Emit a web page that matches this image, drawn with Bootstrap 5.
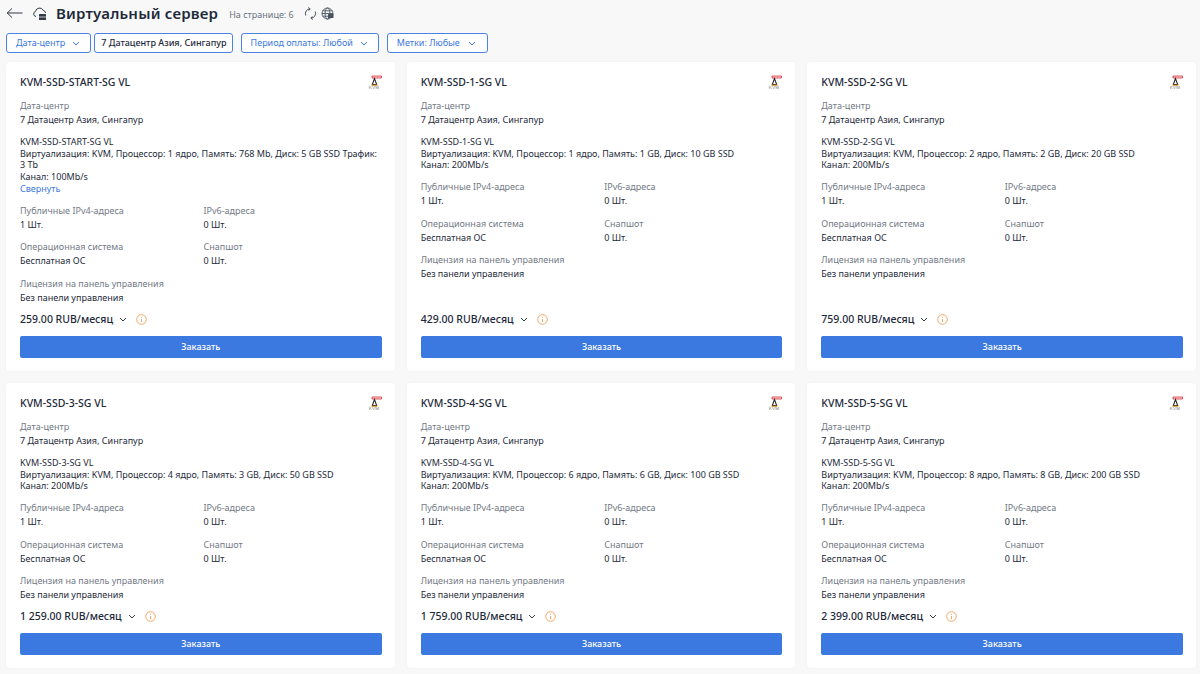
<!DOCTYPE html>
<html lang="ru">
<head>
    <meta charset="UTF-8">
    <title>Виртуальный сервер</title>
    <link href="https://cdn.jsdelivr.net/npm/bootstrap@5.3.3/dist/css/bootstrap.min.css" rel="stylesheet">
    <style>
        body { background: #f8f8f8; color: #1e2a3a; font-family: "Noto Sans", sans-serif; font-size: 9px; height: 674px; overflow: hidden; }
        .page-wrap { padding: 0 4px 0 6px; }
        .page-head { height: 26px; }
        .back-btn { width: 17px; margin-right: 10px; }
        .page-title { font-size: 15px; font-weight: 600; line-height: 24px; margin: 0 11px 0 9px; letter-spacing: .2px; }
        .page-count { font-size: 9px; color: #6d7480; margin-right: 10px; padding-top: 3px; }
        .filter-bar { height: 20px; margin-top: 7px; margin-bottom: 9px; }
        .filter-btn { height: 20px; border: 1px solid #4a82e4; border-radius: 3px; background: #fff; color: #3b78e0; font-size: 9px; line-height: 18px; padding: 0 10px 0 9px; display: flex; align-items: center; gap: 7px; white-space: nowrap; }
        .filter-btn.val { color: #1e2a3a; font-weight: 500; padding: 0 5px 0 6px; margin: 0 8px 0 3px; }
        .filter-btn.tags { margin-left: 8px; padding-right: 11px; gap: 8px; }
        .cards-row { --bs-gutter-x: 12px; --bs-gutter-y: 12px; }
        .srv-card { background: #fff; border-radius: 4px; box-shadow: 0 0 3px rgba(0,0,0,.04); padding: 12px 13px 13px 14px; display: flex; flex-direction: column; height: 309px; }
        .srv-card.short { height: 285px; }
        .srv-title { font-size: 10.5px; font-weight: 500; line-height: 16px; margin-bottom: 9px; }
        .srv-lbl { color: #737a85; line-height: 14px; }
        .srv-val { line-height: 14.5px; }
        .srv-desc { line-height: 11.7px; margin-top: 8.5px; margin-bottom: 9px; }
        .srv-desc a { color: #3b78e0; text-decoration: none; display: block; }
        .srv-props { grid-template-columns: 183.5px 1fr; row-gap: 8px; }
        .srv-wide { margin-top: 8px; }
        .srv-price { font-size: 10.5px; font-weight: 500; line-height: 16px; margin-top: auto; margin-bottom: 9px; gap: 6px; }
        .srv-info { margin-left: 3px; }
        .btn-order { background: #3b78e0; border: 0; color: #fff; font-size: 9px; font-weight: 500; height: 22px; padding: 0; border-radius: 2px; }
        .kvm-logo { width: 16px; height: 16px; margin-top: 1px; }
    </style>
</head>
<body>
    <div class="page-wrap">
        <div class="page-head d-flex align-items-center">
            <svg class="back-btn" viewBox="0 0 17 12" height="12" fill="none" stroke="#333b47" stroke-width="1"><path d="M16.5 6H1M6 1.5 1.2 6 6 10.5"/></svg>
            <svg width="14" height="15" viewBox="0 0 14 15" fill="none" stroke="#333b47"><path d="M3 10.5A2.6 2.6 0 0 1 2.6 5.4 4 4 0 0 1 10.2 4.4 3 3 0 0 1 12.6 7"/><rect x="6" y="8" width="7" height="6" rx=".6" fill="#333b47" stroke="none"/><path d="M6 11h7" stroke="#fff" stroke-width=".7"/></svg>
            <h1 class="page-title">Виртуальный сервер</h1>
            <span class="page-count">На странице: 6</span>
            <svg class="me-1" width="13" height="13" viewBox="0 0 13 13" fill="none" stroke="#4a525e" stroke-width="1"><path d="M1.8 8.5A4.7 4.7 0 0 1 6 1.9M11.2 4.5A4.7 4.7 0 0 1 7 11.1M4.2 .5 6.2 1.9 4.6 3.6M8.8 12.5 6.8 11.1 8.4 9.4"/></svg>
            <svg width="13" height="13" viewBox="0 0 13 13" fill="none" stroke="#4a525e" stroke-width=".9"><circle cx="6.5" cy="6.5" r="5.5"/><ellipse cx="6.5" cy="6.5" rx="2.4" ry="5.5"/><path d="M1 6.5h11M1.7 3.8h9.6M1.7 9.2h9.6"/><rect x="7" y="7" width="5.5" height="4" rx=".5" fill="#4a525e" stroke="none"/></svg>
        </div>
        <div class="filter-bar d-flex">
            <button class="filter-btn">Дата-центр <svg width="8" height="5" viewBox="0 0 8 5" fill="none" stroke="#3b78e0"><path d="m1 1 3 3 3-3"/></svg></button>
            <button class="filter-btn val">7 Датацентр Азия, Сингапур</button>
            <button class="filter-btn">Период оплаты: Любой <svg width="8" height="5" viewBox="0 0 8 5" fill="none" stroke="#3b78e0"><path d="m1 1 3 3 3-3"/></svg></button>
            <button class="filter-btn tags">Метки: Любые <svg width="8" height="5" viewBox="0 0 8 5" fill="none" stroke="#3b78e0"><path d="m1 1 3 3 3-3"/></svg></button>
        </div>
        <div class="row cards-row" id="cards"></div>
    </div>
    <script>
        const plans = [
            { name: 'KVM-SSD-START-SG VL', cpu: '1 ядро', mem: '768 Mb', disk: '5 GB SSD Трафик: 3 Tb', net: '100Mb/s', price: '259.00', more: true },
            { name: 'KVM-SSD-1-SG VL', cpu: '1 ядро', mem: '1 GB', disk: '10 GB SSD', net: '200Mb/s', price: '429.00' },
            { name: 'KVM-SSD-2-SG VL', cpu: '2 ядро', mem: '2 GB', disk: '20 GB SSD', net: '200Mb/s', price: '759.00' },
            { name: 'KVM-SSD-3-SG VL', cpu: '4 ядро', mem: '3 GB', disk: '50 GB SSD', net: '200Mb/s', price: '1 259.00' },
            { name: 'KVM-SSD-4-SG VL', cpu: '6 ядро', mem: '6 GB', disk: '100 GB SSD', net: '200Mb/s', price: '1 759.00' },
            { name: 'KVM-SSD-5-SG VL', cpu: '8 ядро', mem: '8 GB', disk: '200 GB SSD', net: '200Mb/s', price: '2 399.00' }
        ];
        const logo = '<svg class="kvm-logo" viewBox="0 0 16 16" fill="none"><path d="M6 1h9.5v2H6z" fill="#f7d4d4" stroke="#d9343a" stroke-width=".8"/><path d="M8.5 3.5 6.3 9.6h4.4z" stroke="#222" stroke-width="1.1"/><path d="M5.8 10.2h5.4" stroke="#e0a020" stroke-width="1.1"/><text x="8" y="14.4" text-anchor="middle" font-size="4.4" letter-spacing=".3" fill="#777" font-family="Liberation Sans, sans-serif">KVM</text></svg>';
        const chevron = '<svg width="8" height="5" viewBox="0 0 8 5" fill="none" stroke="#333b47"><path d="m1 1 3 3 3-3"/></svg>';
        const info = '<svg class="srv-info" width="11" height="11" viewBox="0 0 11 11" fill="none" stroke="#f0a868"><circle cx="5.5" cy="5.5" r="4.8"/><path d="M5.5 5v3M5.5 3v1"/></svg>';
        document.getElementById('cards').innerHTML = plans.map((p, i) => `
            <div class="col-4">
                <div class="srv-card ${i > 2 ? 'short' : ''}">
                    <div class="d-flex justify-content-between">
                        <div class="srv-title">${p.name}</div>${logo}
                    </div>
                    <div class="srv-lbl">Дата-центр</div>
                    <div class="srv-val">7 Датацентр Азия, Сингапур</div>
                    <div class="srv-desc">${p.name}<br>Виртуализация: KVM, Процессор: ${p.cpu}, Память: ${p.mem}, Диск: ${p.disk}<br>Канал: ${p.net}${p.more ? '<a href="#">Свернуть</a>' : ''}</div>
                    <div class="d-grid srv-props">
                        <div><div class="srv-lbl">Публичные IPv4-адреса</div><div class="srv-val">1 Шт.</div></div>
                        <div><div class="srv-lbl">IPv6-адреса</div><div class="srv-val">0 Шт.</div></div>
                        <div><div class="srv-lbl">Операционная система</div><div class="srv-val">Бесплатная ОС</div></div>
                        <div><div class="srv-lbl">Снапшот</div><div class="srv-val">0 Шт.</div></div>
                    </div>
                    <div class="srv-wide">
                        <div class="srv-lbl">Лицензия на панель управления</div>
                        <div class="srv-val">Без панели управления</div>
                    </div>
                    <div class="srv-price d-flex align-items-center">${p.price} RUB/месяц ${chevron} ${info}</div>
                    <button class="btn btn-order w-100">Заказать</button>
                </div>
            </div>`).join('');
    </script>
    <script src="https://cdn.jsdelivr.net/npm/bootstrap@5.3.3/dist/js/bootstrap.bundle.min.js"></script>
</body>
</html>
